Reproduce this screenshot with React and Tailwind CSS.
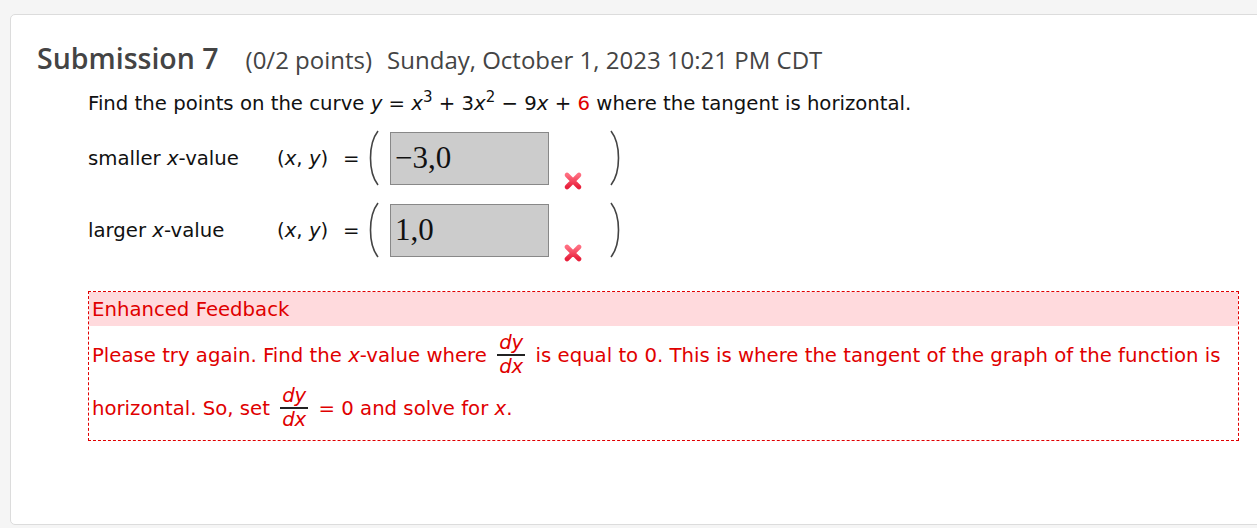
import React from 'react'

const body = { fontFamily: '"DejaVu Sans", Verdana, sans-serif' }
const serif = { fontFamily: '"Liberation Serif", "DejaVu Serif", serif' }

function Paren({ right }) {
  return (
    <svg width="12" height="56" viewBox="0 0 12 56" className="shrink-0">
      <path
        d={right ? 'M2 1 C 12 14, 12 42, 2 55' : 'M10 1 C 0 14, 0 42, 10 55'}
        fill="none"
        stroke="#444"
        strokeWidth="1.6"
      />
    </svg>
  )
}

function Wrong() {
  return (
    <svg width="20" height="20" viewBox="0 0 20 20" className="shrink-0">
      <defs>
        <linearGradient id="xg" x1="0" y1="0" x2="0" y2="1">
          <stop offset="0" stopColor="#ff6d80" />
          <stop offset="1" stopColor="#e8203c" />
        </linearGradient>
      </defs>
      <path d="M4 4 L16 16 M16 4 L4 16" stroke="url(#xg)" strokeWidth="4.6" strokeLinecap="round" />
    </svg>
  )
}

function Frac() {
  return (
    <span className="inline-flex flex-col items-center align-middle mx-[4px] leading-[22px] -translate-y-[2px]">
      <i className="px-[2px]">dy</i>
      <span className="block w-full h-[2px] bg-[#222]" />
      <i className="px-[2px]">dx</i>
    </span>
  )
}

function AnswerRow({ label, value }) {
  return (
    <div className="flex items-center h-[72px]">
      <div className="w-[189px]">{label}</div>
      <div className="w-[66px]">
        (<i>x</i>, <i>y</i>)
      </div>
      <div className="w-[25px]">=</div>
      <Paren />
      <div
        className="ml-[10px] w-[159px] h-[53px] bg-[#cccccc] border border-[#888] text-[31px] pl-[4px] pt-[9px] leading-none text-[#111]"
        style={serif}
      >
        {value}
      </div>
      <div className="ml-[14px] mt-[46px]">
        <Wrong />
      </div>
      <div className="ml-[26px]">
        <Paren right />
      </div>
    </div>
  )
}

export default function App() {
  return (
    <div className="min-h-screen bg-[#f5f5f5] pt-[14px] pl-[10px] overflow-hidden">
      <div className="w-[1270px] h-[511px] bg-white border border-[#dcdcdc] rounded-[5px] pl-[26px] pt-[22px]">
        <div className="flex items-baseline text-[#444]" style={{ fontFamily: '"Open Sans", sans-serif' }}>
          <h2 className="text-[28.5px] font-semibold">Submission 7</h2>
          <span className="ml-[27px] text-[24px]">(0/2 points)</span>
          <span className="ml-[15px] text-[24px]">Sunday, October 1, 2023 10:21 PM CDT</span>
        </div>

        <div className="pl-[51px] text-[19.7px] text-[#111]" style={body}>
          <p className="mt-[9px]">
            Find the points on the curve <i>y</i> = <i>x</i>
            <sup className="text-[15px]">3</sup> + 3<i>x</i>
            <sup className="text-[15px]">2</sup> − 9<i>x</i> + <span className="text-[#e00000]">6</span> where the
            tangent is horizontal.
          </p>

          <div className="mt-[4px]">
            <AnswerRow
              label={
                <>
                  smaller <i>x</i>-value
                </>
              }
              value="−3,0"
            />
            <AnswerRow
              label={
                <>
                  larger <i>x</i>-value
                </>
              }
              value="1,0"
            />
          </div>

          <div className="mt-[25px] w-[1151px] border border-dashed border-[#e00000] text-[#e00000]">
            <div className="bg-[#ffdadd] h-[34px] pl-[3px] pt-[3px]">Enhanced Feedback</div>
            <div className="pl-[3px] pt-[3px] pb-[5px] leading-[53px]">
              Please try again. Find the <i>x</i>-value where <Frac /> is equal to 0. This is where the tangent of
              the graph of the function is horizontal. So, set <Frac /> = 0 and solve for <i>x</i>.
            </div>
          </div>
        </div>
      </div>
    </div>
  )
}
